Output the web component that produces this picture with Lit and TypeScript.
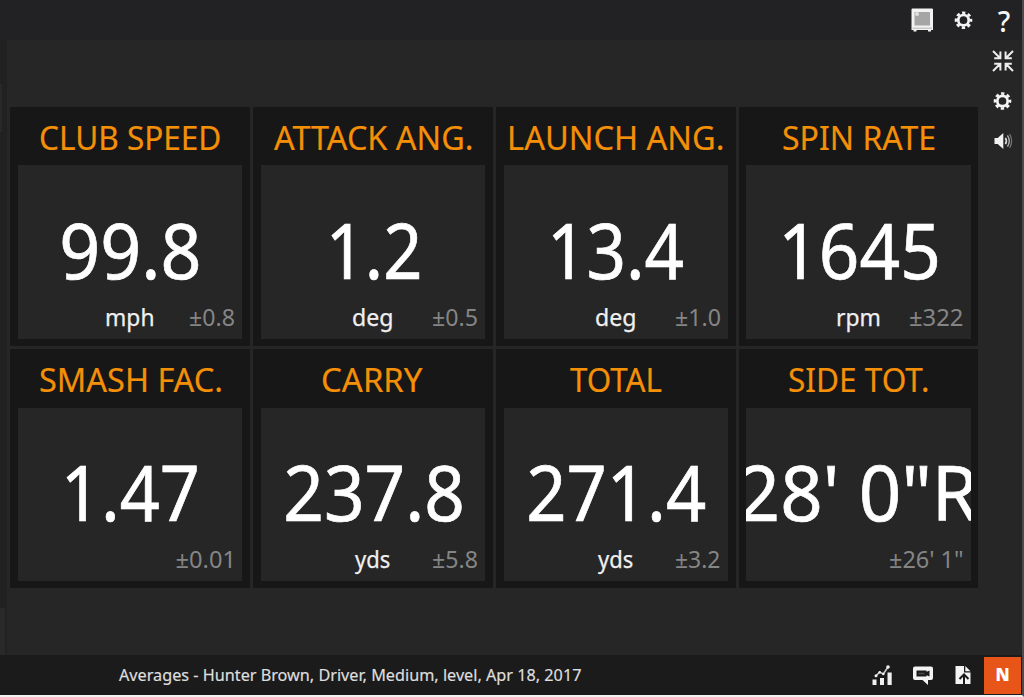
import { LitElement, html, css, svg } from "lit";
import { customElement, property } from "lit/decorators.js";

/** One line of text whose visible glyphs span exactly `w` pixels. */
@customElement("fit-text")
class FitText extends LitElement {
  @property() text = "";
  @property({ type: Number }) w = 0;
  @property({ type: Number }) shift = 0;

  static styles = css`
    :host { display: block; flex: none; white-space: pre; }
    .line { display: inline-block; transform-origin: 0 50%; white-space: pre; }
  `;

  render() {
    const cs = getComputedStyle(this);
    const ctx = document.createElement("canvas").getContext("2d")!;
    ctx.font = `${cs.fontWeight} ${cs.fontSize} ${cs.fontFamily}`;
    const m = ctx.measureText(this.text);
    const ink = m.actualBoundingBoxLeft + m.actualBoundingBoxRight;
    const scale = this.w / ink;
    const x = m.actualBoundingBoxLeft * scale + this.shift;
    this.style.width = `${this.w}px`;
    return html`<span class="line" style="transform: translateX(${x}px) scaleX(${scale})">${this.text}</span>`;
  }
}

interface Tile {
  title: string; tw: number;
  value: string; vw: number; vs: number;
  unit?: string; uw?: number;
  dev: string; dw: number; dr: number;
}

const TILES: Tile[] = [
  { title: "CLUB SPEED", tw: 179, value: "99.8", vw: 136, vs: 0, unit: "mph", uw: 46, dev: "±0.8", dw: 44.5, dr: 0 },
  { title: "ATTACK ANG.", tw: 197.5, value: "1.2", vw: 88, vs: 2, unit: "deg", uw: 39, dev: "±0.5", dw: 44.5, dr: 0 },
  { title: "LAUNCH ANG.", tw: 212.5, value: "13.4", vw: 131, vs: 2.3, unit: "deg", uw: 39, dev: "±1.0", dw: 44.5, dr: 0 },
  { title: "SPIN RATE", tw: 151.5, value: "1645", vw: 153.5, vs: 1.8, unit: "rpm", uw: 42, dev: "±322", dw: 53, dr: 0 },
  { title: "SMASH FAC.", tw: 181, value: "1.47", vw: 131, vs: 1.3, dev: "±0.01", dw: 55, dr: -2.5 },
  { title: "CARRY", tw: 99.5, value: "237.8", vw: 175.5, vs: 1, unit: "yds", uw: 35, dev: "±5.8", dw: 44.5, dr: 0 },
  { title: "TOTAL", tw: 91.5, value: "271.4", vw: 176.5, vs: 1, unit: "yds", uw: 35, dev: "±3.2", dw: 44, dr: 0 },
  { title: "SIDE TOT.", tw: 138.5, value: "28' 0\"R", vw: 237, vs: 0.5, dev: "±26' 1\"", dw: 73, dr: 0 },
];

const gear = svg`
  <g fill="none" stroke="#f4f4f4">
    <circle cx="9" cy="9" r="5.2" stroke-width="2.7"/>
    <circle cx="9" cy="9" r="7.5" stroke-width="2.6" stroke-dasharray="3.3 2.59" stroke-dashoffset="1.65"/>
  </g>`;

@customElement("app-root")
class AppRoot extends LitElement {
  static styles = css`
    :host {
      display: flex; flex-direction: column; width: 1024px; height: 697px; overflow: hidden;
      box-sizing: border-box; border-right: 2px solid #4a4a4a; border-bottom: 2px solid #f2f2f2;
      background: #262626; color: #fff; font-family: "Noto Sans", "Open Sans", sans-serif;
    }
    svg { display: block; flex: none; }
    .top {
      height: 40px; flex: none; background: #222224; display: flex; align-items: center;
      justify-content: flex-end; gap: 20px; padding-right: 8px; box-sizing: border-box;
    }
    .main { flex: 1; display: flex; min-height: 0; }
    .rail { width: 7px; background: #212121; display: flex; flex-direction: column; justify-content: space-between; flex: none; }
    .nub { width: 2px; height: 48px; margin-top: 44px; background: #292929; }
    .nub.low { width: 5px; height: 47px; margin-top: 0; }
    .board {
      display: grid; grid-template-columns: repeat(4, 239.5px); grid-template-rows: repeat(2, 239px);
      gap: 3.4px; padding: 67px 0 0 3.3px; align-content: start;
    }
    .tile { background: #171717; padding: 0 7.5px 7.5px; display: flex; flex-direction: column; box-sizing: border-box; }
    .title { height: 58.2px; display: flex; justify-content: center; align-items: center; color: #f48f08; font-size: 33.5px; line-height: 48px; padding-top: 2px; box-sizing: border-box; -webkit-text-stroke: 0.2px #f48f08; }
    .panel { flex: 1; background: #262626; overflow: hidden; display: flex; flex-direction: column; justify-content: flex-end; }
    .value { display: flex; justify-content: center; font-size: 76.5px; line-height: 90px; margin-bottom: 3px; -webkit-text-stroke: 0.7px #fff; }
    .foot { display: grid; grid-template-columns: 1fr auto 1fr; height: 42px; font-size: 23.5px; line-height: 34px; padding: 3px 8px 0; box-sizing: border-box; }
    .unit { grid-column: 2; color: #f0f0f0; -webkit-text-stroke: 0.25px #f0f0f0; }
    .dev { grid-column: 3; justify-self: end; color: #858585; }
    .tools { flex: 1; display: flex; flex-direction: column; align-items: flex-end; padding: 10px 8px 0 0; gap: 18px; }
    .bottom { height: 40px; flex: none; background: #1b1b1b; display: flex; align-items: center; padding-left: 119px; font-size: 16.5px; line-height: 24px; color: #dedede; box-sizing: border-box; }
    .status { flex: 1; padding-bottom: 1px; -webkit-text-stroke: 0.2px #dedede; }
    .icons { display: flex; gap: 18px; align-items: center; padding-right: 10px; }
    .badge { width: 37px; height: 37px; margin-right: 1px; background: #e85518; display: flex; align-items: center; justify-content: center; font-size: 17px; font-weight: 800; font-family: "Open Sans", sans-serif; color: #fff; }
    .help { width: 20px; display: flex; justify-content: center; font-size: 28px; font-weight: 500; line-height: 38px; padding-top: 2px; color: #f6f6f6; }
  `;

  private tile(t: Tile) {
    return html`
      <div class="tile">
        <div class="title"><fit-text .text=${t.title} .w=${t.tw}></fit-text></div>
        <div class="panel">
          <div class="value"><fit-text .text=${t.value} .w=${t.vw} .shift=${t.vs}></fit-text></div>
          <div class="foot">
            ${t.unit ? html`<fit-text class="unit" .text=${t.unit} .w=${t.uw ?? 0}></fit-text>` : ""}
            <fit-text class="dev" .text=${t.dev} .w=${t.dw} .shift=${t.dr}></fit-text>
          </div>
        </div>
      </div>`;
  }

  render() {
    return html`
      <div class="top">
        <svg width="24" height="24" viewBox="0 0 24 24">
          <path d="M1.500 1.500q0-1 1-1h19.500q1 0 1 1V22h-2v1.500h-3V22H6.500v1.500h-3V22h-2z" fill="#f2f2f2"/>
          <path d="M4.500 4h15.500v13.500H4.500z" fill="#a5a5a5"/>
          <path d="M2.500 20.200h19.500" stroke="#8e8e8e" stroke-width=".6"/>
          <circle cx="7" cy="6" r="2" fill="#e0e0e0"/>
        </svg>
        <svg width="20" height="20" viewBox="-0.5 -1.200 20 20">${gear}</svg>
        <div class="help">?</div>
      </div>
      <div class="main">
        <div class="rail"><div class="nub"></div><div class="nub low"></div></div>
        <div class="board">${TILES.map((t) => this.tile(t))}</div>
        <div class="tools">
          <svg width="22" height="22" viewBox="0 0 22 22" fill="none" stroke="#ededed" stroke-width="2">
            <path d="M1 1l7 7M2.2 8.2h6.2V1.5M21 1l-7 7M19.8 8.2h-6.2V1.5M1 21l7-7M2.2 13.8h6.2v6.7M21 21l-7-7M19.8 13.8h-6.2v6.7"/>
          </svg>
          <svg width="22" height="22" viewBox="-1.5 -2 22 22">${gear}</svg>
          <svg width="22" height="22" viewBox="0 0 22 22">
            <path d="M2.5 8h3.2l5.6-5v16l-5.6-5H2.5z" fill="#f2f2f2"/>
            <path d="M13.4 7.8q2 3.2 0 6.4" fill="none" stroke="#ddd" stroke-width="1.6"/>
            <path d="M15.4 5.4q3.8 5.600 0 11.200" fill="none" stroke="#aaa" stroke-width="1.5"/>
            <path d="M17.600 4q4 7 0 14" fill="none" stroke="#777" stroke-width="1.2"/>
          </svg>
        </div>
      </div>
      <div class="bottom">
        <div class="status"><fit-text .text=${"Averages - Hunter Brown, Driver, Medium, level, Apr 18, 2017"} .w=${462}></fit-text></div>
        <div class="icons">
          <svg width="22" height="22" viewBox="0 0 22 22" fill="#f0f0f0">
            <path d="M0.500 15.500h4V21h-4zM8 14h4v7H8zM15.500 8.500h4.200V21h-4.200z"/>
            <path d="M4 11.800l3.700-3.600 3.600 1.800 4.700-7" fill="none" stroke="#cfcfcf" stroke-width="1.500"/>
            <circle cx="4" cy="11.800" r="1.500"/><circle cx="7.700" cy="8.200" r="1.300"/><circle cx="11.300" cy="10" r="1.300"/><circle cx="16" cy="3" r="1.800"/>
          </svg>
          <svg width="22" height="22" viewBox="0 0 22 22">
            <path d="M3 2.500h16q2 0 2 2v9.500q0 2-2 2h-3v5L10.500 16H3q-2 0-2-2V4.500q0-2 2-2z" fill="#f4f4f4"/>
            <path d="M4.500 6.500h10v1.300l3-1.300v6l-3-1.300v1.300h-10z" fill="#1b1b1b"/>
            <path d="M6.500 9.500h6" stroke="#4a4a4a" stroke-width="1.500"/>
          </svg>
          <svg width="22" height="22" viewBox="0 0 22 22">
            <path d="M3.500 2h8.500v6.500h6.500V20h-15z" fill="#f4f4f4"/>
            <path d="M13.300 2L18.500 7.200h-5.200z" fill="#f4f4f4"/>
            <path d="M12 20v-8M7.500 15l4.500-4.500 4.500 4.500" fill="none" stroke="#1b1b1b" stroke-width="2"/>
          </svg>
        </div>
        <div class="badge">N</div>
      </div>`;
  }
}
